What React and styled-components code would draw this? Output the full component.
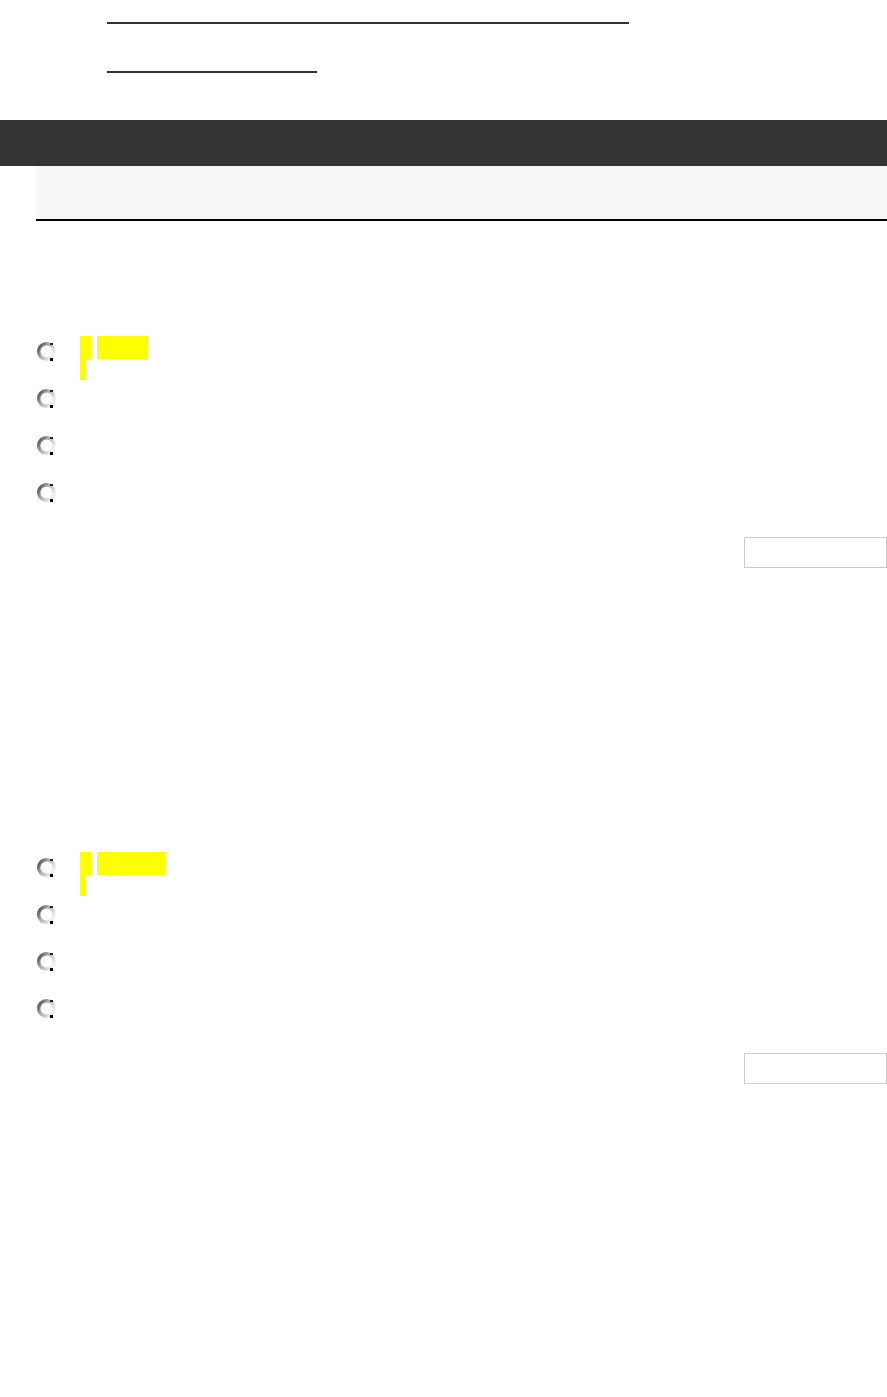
import React from 'react';
import styled, { createGlobalStyle } from 'styled-components';

const GlobalStyle = createGlobalStyle`
  html, body {
    margin: 0;
    padding: 0;
    background: #fff;
    font-family: "Liberation Sans", Arial, sans-serif;
  }
`;

const Page = styled.div`
  width: 887px;
  min-height: 1397px;
`;

const LinkList = styled.ul`
  list-style: none;
  margin: 0;
  padding: 22px 0 0 107px;
  height: 120px;
  box-sizing: border-box;
  display: flex;
  flex-direction: column;
  gap: 47px;
`;

const LinkItem = styled.li`
  width: ${p => p.$w}px;
  height: 2px;
  background: #333;
`;

const TopBar = styled.div`
  height: 46px;
  background: #333;
`;

const SubBar = styled.div`
  margin-left: 36px;
  height: 53px;
  background: #f7f7f7;
  border-bottom: 2px solid #000;
`;

const Question = styled.form`
  padding: 115px 0 0 36px;
  height: 516px;
  box-sizing: border-box;
`;

const Options = styled.div`
  display: flex;
  flex-direction: column;
`;

const Option = styled.label`
  display: flex;
  align-items: flex-start;
  height: 47px;
`;

const Radio = styled.span`
  width: 22px;
  height: 22px;
  margin-top: 5px;
  flex-shrink: 0;
`;

const Label = styled.span`
  margin-left: 22px;
  display: flex;
  gap: 6px;
`;

const Mark = styled.span`
  display: block;
  width: ${p => p.$w}px;
  height: 23px;
  background: #ff0;
`;

const Tick = styled.span`
  display: block;
  width: 11px;
  height: 23px;
  background: #ff0;
  position: relative;
  &::after {
    content: '';
    position: absolute;
    left: 0;
    top: 23px;
    width: 6px;
    height: 21px;
    background: #ff0;
  }
`;

const Actions = styled.div`
  display: flex;
  justify-content: flex-end;
  margin-top: 13px;
`;

const Submit = styled.button`
  width: 143px;
  height: 31px;
  background: #fff;
  border: 1px solid #ccc;
  padding: 0;
`;

const RadioIcon = () => (
  <Radio>
    <svg width="22" height="22" viewBox="0 0 22 22">
      <defs>
        <linearGradient id="rg" x1="0" y1="0" x2="1" y2="0.6">
          <stop offset="0" stopColor="#444" />
          <stop offset="0.45" stopColor="#aaa" />
          <stop offset="1" stopColor="#f0f0f0" />
        </linearGradient>
      </defs>
      <circle cx="10.5" cy="10.5" r="7.8" fill="#fff" stroke="url(#rg)" strokeWidth="3.4" />
      <rect x="14" y="2" width="3" height="2" fill="#222" />
      <rect x="14" y="17" width="3" height="3" fill="#000" />
    </svg>
  </Radio>
);

const QuizQuestion = ({ markWidth }) => (
  <Question>
    <Options>
      {[0, 1, 2, 3].map(i => (
        <Option key={i}>
          <RadioIcon />
          {i === 0 && (
            <Label>
              <Tick />
              <Mark $w={markWidth} />
            </Label>
          )}
        </Option>
      ))}
    </Options>
    <Actions>
      <Submit type="button" />
    </Actions>
  </Question>
);

export default function App() {
  return (
    <Page>
      <GlobalStyle />
      <LinkList>
        <LinkItem $w={522} />
        <LinkItem $w={210} />
      </LinkList>
      <TopBar />
      <SubBar />
      <QuizQuestion markWidth={51} />
      <QuizQuestion markWidth={68} />
    </Page>
  );
}
